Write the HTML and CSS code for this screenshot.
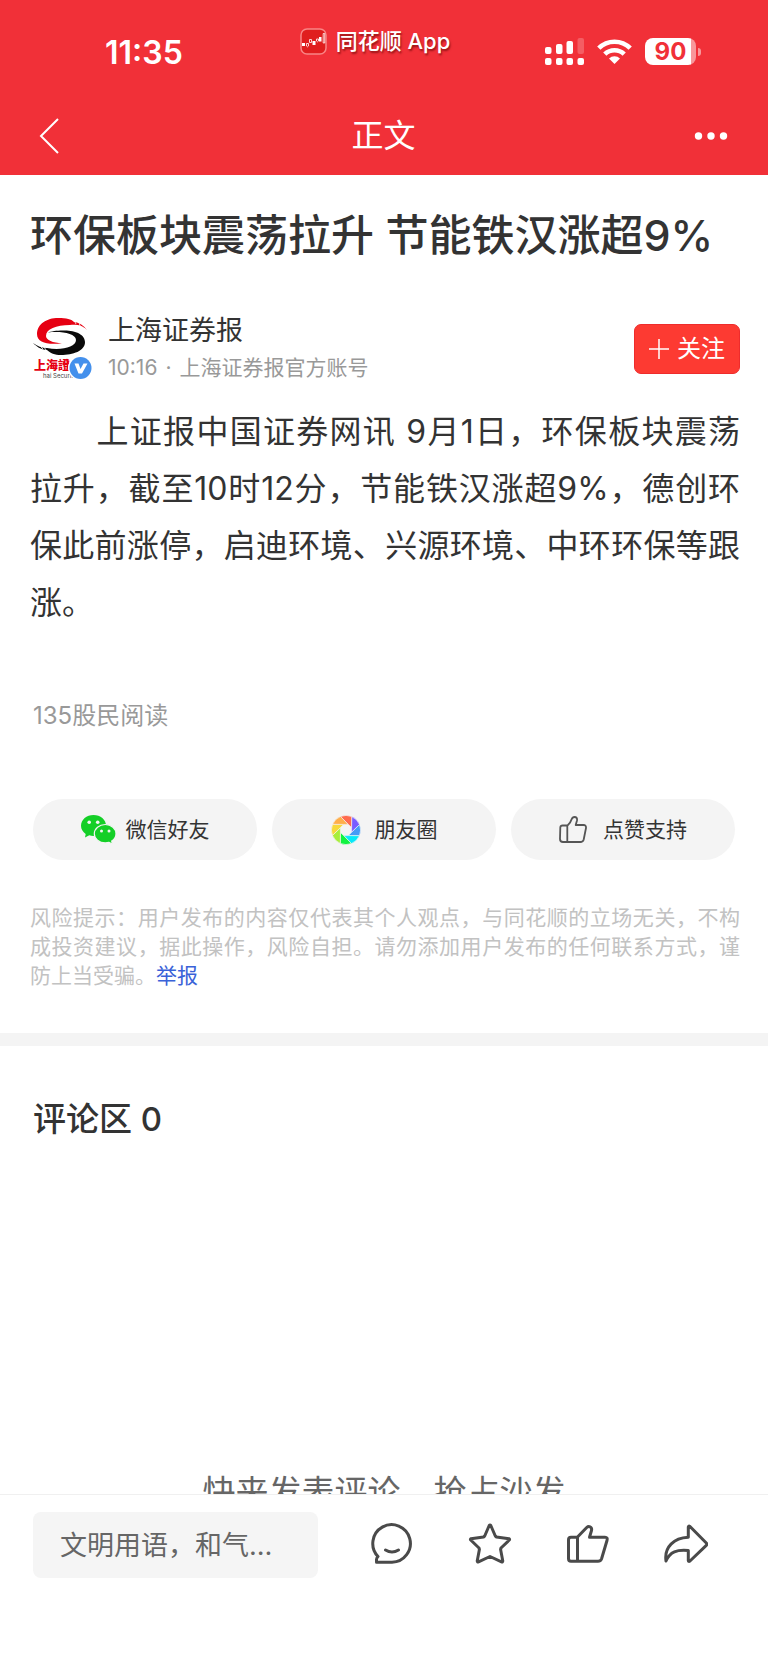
FILE: index.html
```html
<!DOCTYPE html>
<html lang="zh-CN">
<head>
<meta charset="utf-8">
<meta name="viewport" content="width=device-width, initial-scale=1">
<title>正文</title>
<link rel="stylesheet" href="styles.css">
</head>
<body>
<div class="page">
  <header class="header">
    <div class="status">
      <span class="status-time">11:35</span>
      <span class="status-app">
        <svg class="app-logo" viewBox="0 0 27 27" width="27" height="27" aria-hidden="true">
          <rect x="1" y="1" width="25" height="25" rx="6" fill="#e01e1e" stroke="#f88585" stroke-width="1.5"/>
          <path d="M2 15h3v3H2zM12.500 13h3v4h-3zM19 9h2.500v4.500H19z" fill="#fff"/>
          <path d="M6.500 15.500v2.500l1 .8 1-.8v-2.500zM9.500 11.500v3h2v-3zM16.500 11v2l1 .8 1-.8v-2zM23.200 5.500v9.500h1.500V5.500z" fill="none" stroke="#fff" stroke-width=".8"/>
        </svg>
        <span>同花顺 App</span>
      </span>
      <span class="status-icons">
        <svg viewBox="0 0 39 27" width="39" height="27" fill="#fff" aria-hidden="true">
          <rect x="0" y="9" width="6.500" height="7" rx="2"/>
          <rect x="11" y="6" width="6.500" height="10" rx="2"/>
          <rect x="21.500" y="3" width="6.500" height="13" rx="2"/>
          <rect x="32.500" y="0" width="6.500" height="16" rx="2" opacity=".22"/>
          <rect x="0" y="20" width="6.500" height="7" rx="2"/>
          <rect x="11" y="20" width="6.500" height="7" rx="2"/>
          <rect x="21.500" y="20" width="6.500" height="7" rx="2"/>
          <rect x="32.500" y="20" width="6.500" height="7" rx="2"/>
        </svg>
        <svg viewBox="0 0 35 27" width="35" height="27" aria-hidden="true">
          <path d="M1.800 10.200a22.200 22.200 0 0 1 31.400 0M7.800 16.200a13.800 13.800 0 0 1 19.400 0" fill="none" stroke="#fff" stroke-width="4.600"/>
          <path d="M17.500 26 12 20.500a7.800 7.800 0 0 1 11 0z" fill="#fff"/>
        </svg>
        <span class="battery"><span class="battery-level">90</span></span>
      </span>
    </div>
    <nav class="nav">
      <button class="nav-button" type="button" aria-label="返回">
        <svg viewBox="0 0 20 36" width="20" height="36" fill="none" stroke="#fff" stroke-width="2" aria-hidden="true"><path d="M19 1 2 18l17 17"/></svg>
      </button>
      <h1 class="nav-title">正文</h1>
      <button class="nav-button nav-more" type="button" aria-label="更多">
        <svg viewBox="0 0 34 8" width="34" height="8" fill="#fff" aria-hidden="true"><circle cx="4.500" cy="4" r="3.700"/><circle cx="17" cy="4" r="3.700"/><circle cx="29.500" cy="4" r="3.700"/></svg>
      </button>
    </nav>
  </header>

  <article class="article">
    <h2 class="title">环保板块震荡拉升 节能铁汉涨超9%</h2>
    <div class="author">
      <svg class="avatar" viewBox="0 0 60 62" width="60" height="62" role="img" aria-label="上海证券报">
        <path d="M54 12C49 7 44 6.500 37 7 23 7 13 11 13 18c0 4 7 7 16 7.300C15 27 4 25 4 16 4 6 14 0 25 0c9 0 13 1 16 4 5 0 10 4 13 8z" fill="#e60012"/>
        <path d="M15 14.500c7-2.500 36-5 37 9.500C52 33 40 37 28 37c-6 0-11-2-14-5C8 32 3 28 0 25c4 3 9 5 14 5 14 3 29-1 29-8 0-7-16-9-28-7.500z" fill="#0a0a0a"/>
        <path d="m8 29 2 2m1-2 2 3M41 2l2 4m3-2 1 4" stroke="#fff" stroke-width=".8"/>
        <text class="avatar-name" x="1" y="52">上海證</text>
        <text class="avatar-latin" x="10" y="60">hai Securities</text>
        <circle cx="47.500" cy="50" r="12.500" fill="#fff"/>
        <circle cx="47.500" cy="50" r="11" fill="#4490ec"/>
        <path d="M41.500 45.500h4l2 5.500 3-5.500h4L49 55.500h-3.500z" fill="#fff"/>
      </svg>
      <div class="author-text">
        <div class="author-name">上海证券报</div>
        <div class="author-meta"><span>10:16</span><span>·</span><span>上海证券报官方账号</span></div>
      </div>
      <button class="follow" type="button">
        <svg viewBox="0 0 20 20" width="20" height="20" stroke="#fff" stroke-width="1.500" aria-hidden="true"><path d="M0 10h20M10 0v20"/></svg>
        <span>关注</span>
      </button>
    </div>
    <p class="body-text">　　上证报中国证券网讯 9月1日，环保板块震荡拉升，截至10时12分，节能铁汉涨超9%，德创环保此前涨停，启迪环境、兴源环境、中环环保等跟涨。</p>
    <p class="reads">135股民阅读</p>
    <div class="share">
      <button class="pill pill-wechat" type="button">
        <svg viewBox="0 0 35 29" width="35" height="29" aria-hidden="true">
          <path d="M12.500 0C5.500 0 0 4.700 0 10.700c0 3.300 1.800 6.200 4.700 8.200L4 22.500l4.300-2.200c1.300.4 2.700.6 4.200.6 7 0 12.500-4.600 12.500-10.400S19.500 0 12.500 0z" fill="#14cf27"/>
          <path d="M24.300 9.500c-6.100 0-11 4.100-11 9.200s4.900 9.200 11 9.200c1.300 0 2.600-.2 3.700-.5l3.400 1.600-.7-3c2.600-1.700 4.300-4.300 4.300-7.300 0-5.100-4.600-9.200-10.700-9.200z" fill="#14cf27" stroke="#f4f4f4" stroke-width="1.200"/>
          <g fill="#f4f4f4"><circle cx="8.200" cy="7.200" r="1.800"/><circle cx="16.700" cy="7.200" r="1.800"/><circle cx="20.500" cy="16" r="1.500"/><circle cx="28" cy="16" r="1.500"/></g>
        </svg>
        <span>微信好友</span>
      </button>
      <button class="pill pill-moments" type="button">
        <svg viewBox="-15 -15 30 30" width="30" height="30" aria-hidden="true">
          <defs><path id="blade" d="M5.700-13.400A14.600 14.600 0 0 1 13.500-5.500L5.600 2.200 5.600-2.400z" stroke="#f4f4f4" stroke-width=".6"/></defs>
          <use href="#blade" fill="#7a5cff"/>
          <use href="#blade" fill="#459bf6" transform="rotate(45)"/>
          <use href="#blade" fill="#08e8f8" transform="rotate(90)"/>
          <use href="#blade" fill="#10f340" transform="rotate(135)"/>
          <use href="#blade" fill="#a8ee3a" transform="rotate(180)"/>
          <use href="#blade" fill="#f7d93a" transform="rotate(225)"/>
          <use href="#blade" fill="#ffae4a" transform="rotate(270)"/>
          <use href="#blade" fill="#ff6b4e" transform="rotate(315)"/>
        </svg>
        <span>朋友圈</span>
      </button>
      <button class="pill pill-like" type="button">
        <svg viewBox="0 0 28 27" width="28" height="27" fill="none" stroke="#555" stroke-width="1.800" stroke-linejoin="round" aria-hidden="true">
          <path d="M8.500 9.500H3.500Q1.500 9.500 1.300 11.500L1 23Q1 26 4 26H21.500Q24 26 24.700 23.500L27 12Q27.300 9 24.500 9H16.700L18 4.500Q18.500 1 15.500 1 13.500 1 12.500 3.500 11.500 7 8.500 9.500zM8.300 9.500V26"/>
        </svg>
        <span>点赞支持</span>
      </button>
    </div>
    <p class="notice">风险提示：用户发布的内容仅代表其个人观点，与同花顺的立场无关，不构成投资建议，据此操作，风险自担。请勿添加用户发布的任何联系方式，谨防上当受骗。<a class="report" href="#report">举报</a></p>
  </article>

  <section class="comments">
    <h3 class="comments-title">评论区 0</h3>
    <p class="comments-empty">快来发表评论，抢占沙发</p>
  </section>

  <footer class="toolbar">
    <input class="comment-input" type="text" placeholder="文明用语，和气…" aria-label="发表评论">
    <div class="actions">
      <button class="action" type="button" aria-label="评论">
        <svg viewBox="0 0 44 42" width="44" height="42" aria-hidden="true"><path d="M8 33.500A18.800 18.800 0 1 1 22 39.300H6.500V36.500Q6.500 35 8 33.500zM15.500 27Q22 31 28.500 27"/></svg>
      </button>
      <button class="action" type="button" aria-label="收藏">
        <svg viewBox="0 0 44 42" width="44" height="42" aria-hidden="true"><path d="M21.200 2.500Q22 1.500 22.800 2.500L27.300 13 28.500 14 41 15.700Q42 16.200 41.300 17L33 25 32.600 26.500 34.800 38Q34.700 39.300 33.500 38.800L22 33.500 10.500 38.800Q9.300 39.300 9.200 38L11.400 26.500 11 25 2.700 17Q2 16.200 3 15.700L15.500 14 16.700 13z"/></svg>
      </button>
      <button class="action" type="button" aria-label="点赞">
        <svg viewBox="0 0 44 42" width="44" height="42" aria-hidden="true"><path d="M10.500 14.300H5Q2.500 14.300 2.500 17V35.500Q2.500 38.300 5 38.300H32Q34.500 38.300 35.500 36L41 17.500Q42 14.200 39 14.200H23.500L25.500 7.500Q26.200 5 24 3.800 22.300 3 20.700 4.500L12 13.500Q11.300 14.300 10.500 14.300zM11.500 14.300V38.300"/></svg>
      </button>
      <button class="action" type="button" aria-label="分享">
        <svg viewBox="0 0 44 42" width="44" height="42" aria-hidden="true"><path d="M24.300 4Q24.500 2.500 26 3.500L42.300 20Q43.300 21.200 42.300 22.400L26 38Q24.500 39 24.300 37.500V27.500C13 26.500 6 28.500 2 38 0 24 10 15 24.300 14.300z"/></svg>
      </button>
    </div>
  </footer>
</div>
</body>
</html>
```

FILE: styles.css
```css
* {
  box-sizing: border-box;
}

body {
  margin: 0;
  background: #fff;
  color: #333;
  font-family: Inter, "Noto Sans CJK SC", sans-serif;
}

h1, h2, h3, p {
  margin: 0;
}

button {
  margin: 0;
  padding: 0;
  border: 0;
  background: none;
  color: inherit;
  font: inherit;
  cursor: pointer;
}

svg {
  display: block;
  flex: none;
}

.page {
  display: flex;
  flex-direction: column;
  min-height: 100vh;
}

/* Header */
.header {
  background: #f13038;
  color: #fff;
}

.status {
  display: grid;
  grid-template-columns: 1fr auto 1fr;
  align-items: start;
  height: 96px;
  padding: 27px 67px 0 49px;
}

.status-time {
  margin: 10px 0 0 56px;
  font-size: 32px;
  font-weight: 600;
  line-height: 32px;
}

.status-app {
  display: flex;
  align-items: center;
  gap: 9px;
  font-size: 22px;
  font-weight: 500;
  line-height: 28px;
  white-space: nowrap;
  text-shadow: 1px 2px 2px rgba(90, 0, 0, 0.6);
}

.status-icons {
  display: flex;
  align-items: center;
  justify-content: flex-end;
  gap: 13px;
  margin-top: 11px;
}

.battery {
  display: flex;
  align-items: center;
  gap: 2px;
}

.battery::after {
  width: 3px;
  height: 8px;
  border-radius: 0 4px 4px 0;
  background: #f8979b;
  content: "";
}

.battery-level {
  width: 51px;
  height: 27px;
  border-radius: 8px;
  background: linear-gradient(90deg, #fff 90%, #f8979b 90%);
  color: #f13038;
  font-size: 24px;
  font-weight: 700;
  line-height: 28px;
  text-align: center;
}

.nav {
  display: flex;
  align-items: center;
  justify-content: space-between;
  height: 79px;
  padding: 0 40px 0 39px;
}

.nav-button {
  display: flex;
  align-items: center;
  width: 48px;
  height: 48px;
}

.nav-more {
  justify-content: flex-end;
}

.nav-title {
  font-size: 32px;
  font-weight: 400;
  line-height: 48px;
}

/* Article */
.article {
  padding: 30px 28px 43px 30px;
  border-bottom: 13px solid #f4f4f4;
}

.title {
  font-size: 43px;
  font-weight: 500;
  line-height: 60px;
}

.author {
  display: flex;
  align-items: center;
  margin: 47px 0 17px 3px;
}

.author-text {
  flex: 1;
  margin-left: 15px;
}

.author-name {
  font-size: 27px;
  line-height: 38px;
}

.author-meta {
  display: flex;
  gap: 8px;
  color: #999;
  font-size: 21px;
  line-height: 36px;
}

.follow {
  display: flex;
  align-items: center;
  justify-content: center;
  gap: 8px;
  width: 106px;
  height: 50px;
  border: 1px solid #ee2c2c;
  border-radius: 7px;
  background: #fd3a32;
  color: #fff;
  font-size: 24px;
  line-height: 30px;
}

.follow span {
  height: 30px;
}

.avatar-name {
  fill: #e60012;
  font-size: 12px;
  font-weight: 900;
}

.avatar-latin {
  fill: #444;
  font-size: 6px;
}

.body-text {
  font-size: 32px;
  line-height: 57px;
  text-align: justify;
}

.reads {
  margin: 70px 0 68px 3px;
  color: #999;
  font-size: 24px;
  line-height: 30px;
}

.share {
  display: grid;
  grid-template-columns: repeat(3, 1fr);
  gap: 15px;
  margin: 0 5px 43px 3px;
}

.pill {
  display: flex;
  align-items: center;
  justify-content: center;
  height: 61px;
  border-radius: 31px;
  background: #f4f4f4;
  font-size: 21px;
  line-height: 30px;
}

.pill span {
  height: 30px;
}

.pill-wechat {
  gap: 10px;
}

.pill-moments {
  gap: 14px;
}

.pill-like {
  gap: 16px;
}

.notice {
  color: #c2c2c2;
  font-size: 21px;
  line-height: 29px;
  text-align: justify;
}

.report {
  color: #3a62d8;
  text-decoration: none;
}

/* Comments */
.comments {
  flex: 1 1 0;
  min-height: 448px;
  overflow: hidden;
}

.comments-title {
  margin: 49px 33px 325px;
  font-size: 33px;
  font-weight: 500;
  line-height: 48px;
}

.comments-empty {
  color: #666;
  font-size: 33px;
  line-height: 48px;
  text-align: center;
}

/* Bottom toolbar */
.toolbar {
  display: flex;
  align-items: flex-start;
  gap: 52px;
  height: 171px;
  padding: 17px 60px 0 33px;
  border-top: 1px solid #f0f0f0;
  background: #fff;
}

.comment-input {
  flex: 1;
  min-width: 0;
  height: 66px;
  padding: 0 27px;
  border: 0;
  border-radius: 8px;
  background: #f5f5f5;
  color: #333;
  font-family: inherit;
  font-size: 27px;
  text-overflow: ellipsis;
}

.comment-input::placeholder {
  color: #666;
  opacity: 1;
}

.actions {
  display: flex;
  gap: 54px;
  padding-top: 11px;
}

.action svg {
  fill: none;
  stroke: #4a4a4a;
  stroke-linecap: round;
  stroke-linejoin: round;
  stroke-width: 3;
}
```
